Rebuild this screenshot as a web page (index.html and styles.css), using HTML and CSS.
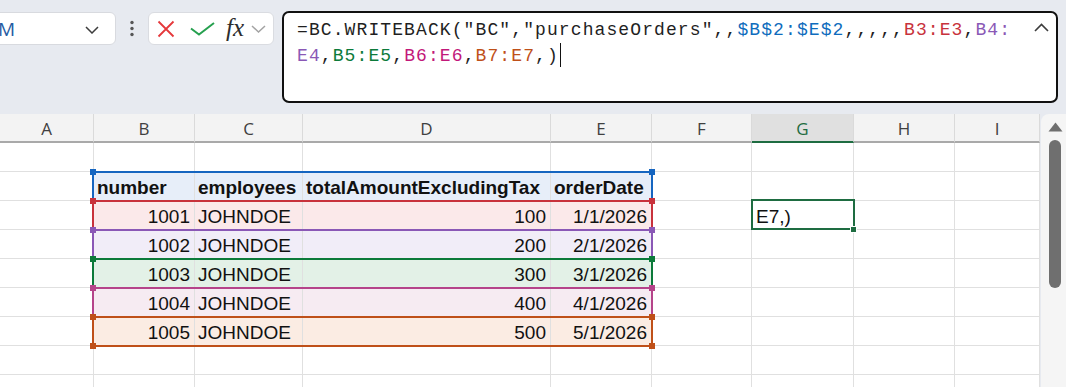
FILE: index.html
```html
<!DOCTYPE html>
<html>
<head>
<meta charset="utf-8">
<link rel="stylesheet" href="styles.css">
</head>
<body>
<div class="toolbar">
  <div class="namebox">
    <span class="nb-text">M</span>
    <svg class="nb-chev" width="14" height="8" viewBox="0 0 14 8"><polyline points="1,1 7,7 13,1" fill="none" stroke="#3c3c3c" stroke-width="1.5"/></svg>
  </div>
  <div class="dots">
    <svg width="6" height="18" viewBox="0 0 6 18"><circle cx="3" cy="2.5" r="1.7" fill="#555"/><circle cx="3" cy="8.5" r="1.7" fill="#555"/><circle cx="3" cy="14.5" r="1.7" fill="#555"/></svg>
  </div>
  <div class="fxbox">
    <svg class="ic-x" width="18" height="18" viewBox="0 0 18 18"><path d="M1.5 1.5 L16.5 16.5 M16.5 1.5 L1.5 16.5" stroke="#e5383b" stroke-width="1.8" fill="none"/></svg>
    <svg class="ic-ok" width="25" height="14" viewBox="0 0 25 14"><polyline points="1,6.5 9,12.5 24,1" fill="none" stroke="#26a04f" stroke-width="2"/></svg>
    <span class="fx">fx</span>
    <svg class="ic-chev" width="15" height="8" viewBox="0 0 15 8"><polyline points="1,1 7.5,7 14,1" fill="none" stroke="#a3a3a3" stroke-width="1.5"/></svg>
  </div>
  <div class="formula">
    <div class="ftext"><span>=BC.WRITEBACK("BC","purchaseOrders",,</span><span class="k-blue">$B$2:$E$2</span><span>,,,,,</span><span class="k-red">B3:E3</span><span>,</span><span class="k-purple">B4:</span><br><span class="k-purple">E4</span><span>,</span><span class="k-green">B5:E5</span><span>,</span><span class="k-mag">B6:E6</span><span>,</span><span class="k-orange">B7:E7</span><span>,)</span><span class="caret"></span></div>
    <svg class="f-up" width="15" height="9" viewBox="0 0 15 9"><polyline points="1,8 7.5,1.5 14,8" fill="none" stroke="#3c3c3c" stroke-width="1.6"/></svg>
  </div>
</div>

<div class="sheet">
  <div class="grid">
    <div class="hrow">
      <div class="hc a">A</div><div class="hc b">B</div><div class="hc cc">C</div><div class="hc d">D</div><div class="hc e">E</div><div class="hc f">F</div><div class="hc g sel">G</div><div class="hc h">H</div><div class="hc i">I</div>
    </div>

    <div class="row">
      <div class="c a"></div><div class="c b"></div><div class="c cc"></div><div class="c d"></div><div class="c e"></div><div class="c f"></div><div class="c g"></div><div class="c h"></div><div class="c i"></div>
    </div>

    <div class="row">
      <div class="c a"></div>
      <div class="range r-blue">
        <div class="c b bold">number</div><div class="c cc bold">employees</div><div class="c d bold">totalAmountExcludingTax</div><div class="c e bold">orderDate</div>
        <span class="hd tl"></span><span class="hd tr"></span>
      </div>
      <div class="c f"></div><div class="c g"></div><div class="c h"></div><div class="c i"></div>
    </div>

    <div class="row">
      <div class="c a"></div>
      <div class="range r-red">
        <div class="c b num">1001</div><div class="c cc">JOHNDOE</div><div class="c d num">100</div><div class="c e num">1/1/2026</div>
        <span class="hd tl"></span><span class="hd tr"></span>
      </div>
      <div class="c f"></div><div class="c g active">E7,)<span class="fill"></span></div><div class="c h"></div><div class="c i"></div>
    </div>

    <div class="row">
      <div class="c a"></div>
      <div class="range r-purple">
        <div class="c b num">1002</div><div class="c cc">JOHNDOE</div><div class="c d num">200</div><div class="c e num">2/1/2026</div>
        <span class="hd tl"></span><span class="hd tr"></span>
      </div>
      <div class="c f"></div><div class="c g"></div><div class="c h"></div><div class="c i"></div>
    </div>

    <div class="row">
      <div class="c a"></div>
      <div class="range r-green">
        <div class="c b num">1003</div><div class="c cc">JOHNDOE</div><div class="c d num">300</div><div class="c e num">3/1/2026</div>
        <span class="hd tl"></span><span class="hd tr"></span>
      </div>
      <div class="c f"></div><div class="c g"></div><div class="c h"></div><div class="c i"></div>
    </div>

    <div class="row">
      <div class="c a"></div>
      <div class="range r-mag">
        <div class="c b num">1004</div><div class="c cc">JOHNDOE</div><div class="c d num">400</div><div class="c e num">4/1/2026</div>
        <span class="hd tl"></span><span class="hd tr"></span>
      </div>
      <div class="c f"></div><div class="c g"></div><div class="c h"></div><div class="c i"></div>
    </div>

    <div class="row">
      <div class="c a"></div>
      <div class="range r-orange last">
        <div class="c b num">1005</div><div class="c cc">JOHNDOE</div><div class="c d num">500</div><div class="c e num">5/1/2026</div>
        <span class="hd tl"></span><span class="hd tr"></span><span class="hd bl"></span><span class="hd br"></span>
      </div>
      <div class="c f"></div><div class="c g"></div><div class="c h"></div><div class="c i"></div>
    </div>

    <div class="row">
      <div class="c a"></div><div class="c b"></div><div class="c cc"></div><div class="c d"></div><div class="c e"></div><div class="c f"></div><div class="c g"></div><div class="c h"></div><div class="c i"></div>
    </div>
    <div class="row">
      <div class="c a"></div><div class="c b"></div><div class="c cc"></div><div class="c d"></div><div class="c e"></div><div class="c f"></div><div class="c g"></div><div class="c h"></div><div class="c i"></div>
    </div>
  </div>
  <div class="vscroll">
    <svg class="up" width="15" height="10" viewBox="0 0 15 10"><polygon points="7.5,0.5 14.5,9.5 0.5,9.5" fill="#6f6f6f"/></svg>
    <div class="thumb"></div>
  </div>
</div>
</body>
</html>
```

FILE: styles.css
```css
* { box-sizing: border-box; }
html, body { margin: 0; padding: 0; }
body {
  width: 1066px;
  height: 387px;
  overflow: hidden;
  background: #e7eaf0;
  font-family: "Liberation Sans", Arial, sans-serif;
  color: #1b1b1b;
}

/* ---------- toolbar ---------- */
.toolbar {
  height: 114px;
  display: flex;
  align-items: flex-start;
  padding-top: 11px;
}
.namebox {
  margin-top: 1px;
  margin-left: -10px;
  width: 126px;
  height: 33px;
  background: #fff;
  border: 1px solid #d8dadf;
  border-radius: 6px;
  display: flex;
  align-items: center;
  justify-content: space-between;
  padding: 0 16px 0 7px;
  overflow: hidden;
}
.nb-text {
  font-family: "Open Sans", "Liberation Sans", sans-serif;
  font-size: 19px;
  color: #255ca3;
}
.nb-chev { margin-top: 2px; }
.dots {
  margin-top: 1px;
  margin-left: 13px;
  height: 33px;
  display: flex;
  align-items: center;
}
.fxbox {
  margin-top: 1px;
  margin-left: 13px;
  width: 126px;
  height: 33px;
  background: #fff;
  border: 1px solid #dadce1;
  border-radius: 6px;
  display: flex;
  align-items: center;
  padding-left: 8px;
}
.ic-ok { margin-left: 15px; margin-top: 1px; }
.fx {
  margin-left: 11px;
  font-family: "Liberation Serif", "DejaVu Serif", serif;
  font-style: italic;
  font-size: 25px;
  color: #2d2d2d;
  line-height: 1;
  margin-top: -2px;
}
.ic-chev { margin-left: 7px; }
.formula {
  margin-left: 8px;
  width: 776px;
  height: 92px;
  background: #fff;
  border: 2.5px solid #111;
  border-radius: 7px;
  display: flex;
  justify-content: space-between;
  align-items: flex-start;
  padding: 4px 7px 0 13px;
}
.ftext {
  font-family: "Liberation Mono", "DejaVu Sans Mono", monospace;
  font-size: 18px;
  letter-spacing: 1.1px;
  line-height: 26px;
  color: #1f1f1f;
  white-space: nowrap;
}
.k-blue { color: #0f6cbd; }
.k-red { color: #c8323c; }
.k-purple { color: #8a58b6; }
.k-green { color: #0c7a3a; }
.k-mag { color: #c2187a; }
.k-orange { color: #bf5019; }
.caret {
  display: inline-block;
  width: 0;
  height: 24px;
  border-left: 1.5px solid #111;
  vertical-align: -6px;
  margin-left: 1px;
}
.f-up { margin-top: 6px; }

/* ---------- sheet ---------- */
.sheet {
  display: flex;
  height: 273px;
}
.grid {
  width: 1040px;
  background: #fff;
}
.hrow {
  display: flex;
  height: 29px;
  background: #f3f3f3;
}
.hc {
  height: 29px;
  border-right: 1px solid #dadada;
  border-bottom: 2px solid #a9a9a9;
  text-align: center;
  font-family: "Open Sans", "Liberation Sans", sans-serif;
  font-size: 17px;
  line-height: 29px;
  color: #404040;
}
.hc.sel {
  background: #e0e0e0;
  color: #1e6c41;
  border-bottom: 2px solid #1e6c41;
}
.row {
  display: flex;
  height: 29px;
}
.c {
  height: 29px;
  border-right: 1px solid #e0e0e0;
  border-bottom: 1px solid #e0e0e0;
  font-size: 19px;
  line-height: 31px;
  padding: 0 3px;
  white-space: nowrap;
  color: #111;
}
.c.num { text-align: right; padding-right: 4px; }
.c.bold { font-weight: bold; }

.a { width: 94px; }
.b { width: 101px; }
.cc { width: 108px; }
.d { width: 248px; }
.e { width: 101px; }
.f { width: 100px; }
.g { width: 102px; }
.h { width: 101px; }
.i { width: 85px; }

/* coloured range outlines */
.range {
  display: flex;
  position: relative;
  background: var(--bg);
}
.range::before {
  content: "";
  position: absolute;
  top: -1px;
  left: -2px;
  right: -1px;
  bottom: 0;
  border: 2px solid var(--lc);
  border-bottom: none;
  pointer-events: none;
}
.range.last::before {
  bottom: -1px;
  border-bottom: 2px solid var(--lc);
}
.hd {
  position: absolute;
  width: 6px;
  height: 6px;
  background: var(--lc);
  z-index: 2;
}
.hd.tl { left: -4px; top: -3px; }
.hd.tr { right: -3px; top: -3px; }
.hd.bl { left: -4px; bottom: -3px; }
.hd.br { right: -3px; bottom: -3px; }

.r-blue { --bg: #e7eef9; --lc: #1565c0; }
.r-red { --bg: #fbe9ea; --lc: #c8323c; }
.r-purple { --bg: #f1edf8; --lc: #8a58b6; }
.r-green { --bg: #e3f1e7; --lc: #0c7a3a; }
.r-mag { --bg: #f6ebf2; --lc: #b5448a; }
.r-orange { --bg: #fbece3; --lc: #bf5019; }

/* active cell */
.c.active {
  position: relative;
  padding-left: 4px;
}
.c.active::before {
  content: "";
  position: absolute;
  top: -2px;
  left: -1px;
  right: -2px;
  bottom: -1px;
  border: 2px solid #1e6c41;
  pointer-events: none;
}
.fill {
  position: absolute;
  right: -4px;
  bottom: -4px;
  width: 7px;
  height: 7px;
  background: #1e6c41;
  border: 1px solid #fff;
  z-index: 3;
}

/* vertical scrollbar */
.vscroll {
  width: 25px;
  margin-left: 1px;
  background: #f5f5f5;
  border-top-left-radius: 8px;
  display: flex;
  flex-direction: column;
  align-items: center;
  padding-left: 3px;
}
.vscroll .up { margin-top: 8px; }
.thumb {
  margin-top: 8px;
  width: 12px;
  height: 148px;
  border-radius: 6px;
  background: #6f6f6f;
}
```
